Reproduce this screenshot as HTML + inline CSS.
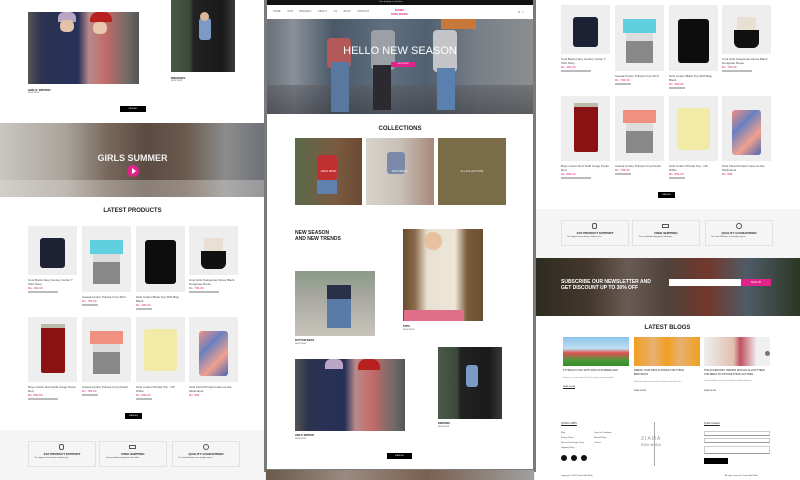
<!DOCTYPE html>
<html><head><meta charset="utf-8"><style>
*{margin:0;padding:0;box-sizing:border-box}
body{width:800px;height:480px;overflow:hidden;background:#e9e9e9;position:relative;font-family:"Liberation Sans",sans-serif;color:#222}
.a{position:absolute}
.panel{position:absolute;background:#fff;overflow:hidden}
.t{position:absolute;font-size:3px;color:#444;white-space:nowrap}
.h{position:absolute;font-weight:bold;color:#222;white-space:nowrap}
.btn{position:absolute;background:#000;height:6px;color:#fff;font-size:2px;text-align:center;line-height:6px}
.tile{position:absolute;background:#eeeeee;overflow:hidden}
.g{position:absolute}
.pr{position:absolute;font-size:3px;color:#d6247e}
.ln{position:absolute;height:2px;background:#bbb}
</style></head><body>

<!-- LEFT PANEL -->
<div class="panel" style="left:0;top:0;width:265px;height:480px">
  <div class="a" style="left:28px;top:12px;width:111px;height:72px;background:linear-gradient(90deg,#555 0,#2c3350 12%,#263058 45%,#b88a8a 55%,#c46a6a 70%,#6f6a66 90%,#555 100%)"></div>
  <div class="a" style="left:58px;top:12px;width:18px;height:10px;background:#b9a6c4;border-radius:6px 6px 0 0"></div>
  <div class="a" style="left:90px;top:12px;width:22px;height:10px;background:#b82020;border-radius:8px 8px 0 0"></div>
  <div class="a" style="left:60px;top:20px;width:14px;height:12px;background:#e3c2a8;border-radius:5px"></div>
  <div class="a" style="left:93px;top:22px;width:14px;height:12px;background:#e8c7ad;border-radius:5px"></div>
  <div class="h" style="left:28px;top:88px;font-size:3px">GIRLS' WINTER</div>
  <div class="t" style="left:28px;top:92px;font-size:2px">SHOP NOW</div>
  <div class="a" style="left:171px;top:0;width:64px;height:72px;background:linear-gradient(90deg,#4a5a48 0,#3b4a3a 30%,#222 35%,#1a1a1a 80%,#3a3a3a 100%)"></div>
  <div class="a" style="left:199px;top:18px;width:12px;height:22px;background:#7b9ac7;border-radius:3px"></div>
  <div class="a" style="left:200px;top:12px;width:9px;height:9px;background:#d9b89a;border-radius:50%"></div>
  <div class="h" style="left:171px;top:76px;font-size:3px">DRESSES</div>
  <div class="t" style="left:171px;top:80px;font-size:2px">SHOP NOW</div>
  <div class="btn" style="left:120px;top:106px;width:26px">VIEW ALL</div>
  <!-- girls summer -->
  <div class="a" style="left:0;top:123px;width:265px;height:74px;background:linear-gradient(90deg,#c9c6c0 0,#a9a39b 25%,#7a6a5e 40%,#5a4a40 55%,#6b5a4e 70%,#8c8c8c 85%,#6c7078 100%)"></div>
  <div class="a" style="left:0;top:180px;width:265px;height:17px;background:rgba(230,225,220,.35)"></div>
  <div class="h" style="left:0;top:153px;width:265px;text-align:center;font-size:9px;color:#f2f2f2">GIRLS SUMMER</div>
  <div class="a" style="left:127px;top:165px;width:12px;height:12px;border-radius:50%;background:#e0248c"></div>
  <div class="a" style="left:132px;top:168px;width:0;height:0;border-left:4px solid #fff;border-top:3px solid transparent;border-bottom:3px solid transparent"></div>
  <div class="h" style="left:0;top:208px;width:265px;text-align:center;font-size:6px">LATEST PRODUCTS</div>
</div>

<!-- PRODUCT GRIDS (left at 0,220; right at 533,-1) -->
<div id="gridL" class="a" style="left:0;top:220px;width:265px;height:260px">
  <div class="tile" style="left:28px;top:6px;width:49px;height:49px"><div class="g" style="left:12px;top:12px;width:25px;height:30px;background:#1c2233;border-radius:3px"></div></div>
  <div class="tile" style="left:82px;top:6px;width:49px;height:66px"><div class="g" style="left:8px;top:14px;width:33px;height:14px;background:#5fd0e0"></div><div class="g" style="left:11px;top:28px;width:27px;height:8px;background:#ddd"></div><div class="g" style="left:11px;top:36px;width:27px;height:22px;background:#888"></div></div>
  <div class="tile" style="left:136px;top:6px;width:49px;height:66px"><div class="g" style="left:9px;top:14px;width:31px;height:44px;background:#0d0d0d;border-radius:3px"></div></div>
  <div class="tile" style="left:189px;top:6px;width:49px;height:49px"><div class="g" style="left:15px;top:12px;width:19px;height:13px;background:#e9dfd2"></div><div class="g" style="left:12px;top:25px;width:25px;height:18px;background:#111;border-radius:0 0 6px 6px"></div></div>
  <div class="t" style="left:28px;top:58px">Cool Boots Navy Henley Cotton T</div><div class="t" style="left:28px;top:62px">Shirt Navy</div><div class="pr" style="left:28px;top:66px">Rs. 499.00</div><div class="ln" style="left:28px;top:71px;width:30px"></div>
  <div class="t" style="left:82px;top:75px">Casual Cotton Printed Crop Shirt</div><div class="pr" style="left:82px;top:79px">Rs. 799.00</div><div class="ln" style="left:82px;top:84px;width:16px"></div>
  <div class="t" style="left:136px;top:75px">Girls Cotton Black Top With Bag</div><div class="t" style="left:136px;top:79px">Black</div><div class="pr" style="left:136px;top:83px">Rs. 499.00</div><div class="ln" style="left:136px;top:88px;width:16px"></div>
  <div class="t" style="left:189px;top:58px">Cool Girls Suspender Dress Black</div><div class="t" style="left:189px;top:62px">Dungaree Dress</div><div class="pr" style="left:189px;top:66px">Rs. 799.00</div><div class="ln" style="left:189px;top:71px;width:30px"></div>
  <div class="tile" style="left:28px;top:97px;width:49px;height:65px"><div class="g" style="left:13px;top:8px;width:24px;height:48px;background:#8a1212;border-radius:2px"></div><div class="g" style="left:13px;top:7px;width:24px;height:4px;background:#bba"></div></div>
  <div class="tile" style="left:82px;top:97px;width:49px;height:65px"><div class="g" style="left:8px;top:14px;width:33px;height:13px;background:#f09080"></div><div class="g" style="left:11px;top:27px;width:27px;height:8px;background:#ddd"></div><div class="g" style="left:11px;top:35px;width:27px;height:22px;background:#888"></div></div>
  <div class="tile" style="left:136px;top:97px;width:49px;height:65px"><div class="g" style="left:8px;top:12px;width:33px;height:42px;background:#f2eba8;border-radius:3px"></div></div>
  <div class="tile" style="left:189px;top:97px;width:49px;height:65px"><div class="g" style="left:10px;top:14px;width:29px;height:45px;background:linear-gradient(135deg,#f09080,#6a80c0,#f0a090,#4a66b0);border-radius:3px"></div></div>
  <div class="t" style="left:28px;top:165px">Boys Cotton Red Solid Cargo Pants</div><div class="t" style="left:28px;top:169px">Red</div><div class="pr" style="left:28px;top:173px">Rs. 899.00</div><div class="ln" style="left:28px;top:178px;width:30px"></div>
  <div class="t" style="left:82px;top:165px">Casual Cotton Printed Crop Peach</div><div class="pr" style="left:82px;top:169px">Rs. 799.00</div><div class="ln" style="left:82px;top:174px;width:16px"></div>
  <div class="t" style="left:136px;top:165px">Girls Cotton Printed Top - Off</div><div class="t" style="left:136px;top:169px">White</div><div class="pr" style="left:136px;top:173px">Rs. 599.00</div><div class="ln" style="left:136px;top:178px;width:16px"></div>
  <div class="t" style="left:189px;top:165px">Girls Floral Printed Cotton A-line</div><div class="t" style="left:189px;top:169px">Multicolour</div><div class="pr" style="left:189px;top:173px">Rs. 599</div>
  <div class="btn" style="left:125px;top:193px;width:17px">VIEW ALL</div>
  <div class="a" style="left:0;top:210px;width:265px;height:50px;background:#f5f5f5"></div>
  <div class="a" style="left:28px;top:221px;width:68px;height:26px;border:1px solid #e2e2e2"></div>
  <div class="a" style="left:99px;top:221px;width:68px;height:26px;border:1px solid #e2e2e2"></div>
  <div class="a" style="left:172px;top:221px;width:68px;height:26px;border:1px solid #e2e2e2"></div>
  <div class="h" style="left:28px;top:232px;width:68px;text-align:center;font-size:3px">24/7 PRODUCT SUPPORT</div>
  <div class="h" style="left:99px;top:232px;width:68px;text-align:center;font-size:3px">FREE SHIPPING</div>
  <div class="h" style="left:172px;top:232px;width:68px;text-align:center;font-size:3px">QUALITY GUARANTEED</div>
  <div class="t" style="left:34px;top:237px;font-size:2px">Our support team always ready for you</div>
  <div class="t" style="left:106px;top:237px;font-size:2px">Free worldwide shipping on all orders</div>
  <div class="t" style="left:178px;top:237px;font-size:2px">Our Team Members are quality experts</div>
  <div class="a" style="left:59px;top:224px;width:5px;height:6px;border:1px solid #555;border-radius:2px"></div>
  <div class="a" style="left:129px;top:225px;width:7px;height:4px;border:1px solid #555"></div>
  <div class="a" style="left:203px;top:224px;width:6px;height:6px;border:1px solid #555;border-radius:50%"></div>
</div>

<!-- RIGHT PANEL -->
<div class="panel" style="left:535px;top:0;width:265px;height:480px">
  <div class="a" style="left:-535px;top:0;width:800px;height:480px"></div>
</div>
<div id="gridR" class="a" style="left:533px;top:-1px;width:267px;height:260px;overflow:hidden">
  <div class="tile" style="left:28px;top:6px;width:49px;height:49px"><div class="g" style="left:12px;top:12px;width:25px;height:30px;background:#1c2233;border-radius:3px"></div></div>
  <div class="tile" style="left:82px;top:6px;width:49px;height:66px"><div class="g" style="left:8px;top:14px;width:33px;height:14px;background:#5fd0e0"></div><div class="g" style="left:11px;top:28px;width:27px;height:8px;background:#ddd"></div><div class="g" style="left:11px;top:36px;width:27px;height:22px;background:#888"></div></div>
  <div class="tile" style="left:136px;top:6px;width:49px;height:66px"><div class="g" style="left:9px;top:14px;width:31px;height:44px;background:#0d0d0d;border-radius:3px"></div></div>
  <div class="tile" style="left:189px;top:6px;width:49px;height:49px"><div class="g" style="left:15px;top:12px;width:19px;height:13px;background:#e9dfd2"></div><div class="g" style="left:12px;top:25px;width:25px;height:18px;background:#111;border-radius:0 0 6px 6px"></div></div>
  <div class="t" style="left:28px;top:58px">Cool Boots Navy Henley Cotton T</div><div class="t" style="left:28px;top:62px">Shirt Navy</div><div class="pr" style="left:28px;top:66px">Rs. 499.00</div><div class="ln" style="left:28px;top:71px;width:30px"></div>
  <div class="t" style="left:82px;top:75px">Casual Cotton Printed Crop Shirt</div><div class="pr" style="left:82px;top:79px">Rs. 799.00</div><div class="ln" style="left:82px;top:84px;width:16px"></div>
  <div class="t" style="left:136px;top:75px">Girls Cotton Black Top With Bag</div><div class="t" style="left:136px;top:79px">Black</div><div class="pr" style="left:136px;top:83px">Rs. 499.00</div><div class="ln" style="left:136px;top:88px;width:16px"></div>
  <div class="t" style="left:189px;top:58px">Cool Girls Suspender Dress Black</div><div class="t" style="left:189px;top:62px">Dungaree Dress</div><div class="pr" style="left:189px;top:66px">Rs. 799.00</div><div class="ln" style="left:189px;top:71px;width:30px"></div>
  <div class="tile" style="left:28px;top:97px;width:49px;height:65px"><div class="g" style="left:13px;top:8px;width:24px;height:48px;background:#8a1212;border-radius:2px"></div><div class="g" style="left:13px;top:7px;width:24px;height:4px;background:#bba"></div></div>
  <div class="tile" style="left:82px;top:97px;width:49px;height:65px"><div class="g" style="left:8px;top:14px;width:33px;height:13px;background:#f09080"></div><div class="g" style="left:11px;top:27px;width:27px;height:8px;background:#ddd"></div><div class="g" style="left:11px;top:35px;width:27px;height:22px;background:#888"></div></div>
  <div class="tile" style="left:136px;top:97px;width:49px;height:65px"><div class="g" style="left:8px;top:12px;width:33px;height:42px;background:#f2eba8;border-radius:3px"></div></div>
  <div class="tile" style="left:189px;top:97px;width:49px;height:65px"><div class="g" style="left:10px;top:14px;width:29px;height:45px;background:linear-gradient(135deg,#f09080,#6a80c0,#f0a090,#4a66b0);border-radius:3px"></div></div>
  <div class="t" style="left:28px;top:165px">Boys Cotton Red Solid Cargo Pants</div><div class="t" style="left:28px;top:169px">Red</div><div class="pr" style="left:28px;top:173px">Rs. 899.00</div><div class="ln" style="left:28px;top:178px;width:30px"></div>
  <div class="t" style="left:82px;top:165px">Casual Cotton Printed Crop Peach</div><div class="pr" style="left:82px;top:169px">Rs. 799.00</div><div class="ln" style="left:82px;top:174px;width:16px"></div>
  <div class="t" style="left:136px;top:165px">Girls Cotton Printed Top - Off</div><div class="t" style="left:136px;top:169px">White</div><div class="pr" style="left:136px;top:173px">Rs. 599.00</div><div class="ln" style="left:136px;top:178px;width:16px"></div>
  <div class="t" style="left:189px;top:165px">Girls Floral Printed Cotton A-line</div><div class="t" style="left:189px;top:169px">Multicolour</div><div class="pr" style="left:189px;top:173px">Rs. 599</div>
  <div class="btn" style="left:125px;top:193px;width:17px">VIEW ALL</div>
  <div class="a" style="left:2px;top:210px;width:265px;height:50px;background:#f5f5f5"></div>
  <div class="a" style="left:28px;top:221px;width:68px;height:26px;border:1px solid #e2e2e2"></div>
  <div class="a" style="left:99px;top:221px;width:68px;height:26px;border:1px solid #e2e2e2"></div>
  <div class="a" style="left:172px;top:221px;width:68px;height:26px;border:1px solid #e2e2e2"></div>
  <div class="h" style="left:28px;top:232px;width:68px;text-align:center;font-size:3px">24/7 PRODUCT SUPPORT</div>
  <div class="h" style="left:99px;top:232px;width:68px;text-align:center;font-size:3px">FREE SHIPPING</div>
  <div class="h" style="left:172px;top:232px;width:68px;text-align:center;font-size:3px">QUALITY GUARANTEED</div>
  <div class="t" style="left:34px;top:237px;font-size:2px">Our support team always ready for you</div>
  <div class="t" style="left:106px;top:237px;font-size:2px">Free worldwide shipping on all orders</div>
  <div class="t" style="left:178px;top:237px;font-size:2px">Our Team Members are quality experts</div>
  <div class="a" style="left:59px;top:224px;width:5px;height:6px;border:1px solid #555;border-radius:2px"></div>
  <div class="a" style="left:129px;top:225px;width:7px;height:4px;border:1px solid #555"></div>
  <div class="a" style="left:203px;top:224px;width:6px;height:6px;border:1px solid #555;border-radius:50%"></div>
</div>

<!-- right lower -->
<div class="a" style="left:535px;top:258px;width:265px;height:58px;background:linear-gradient(90deg,#3d3a2c 0,#5a4a3c 20%,#8a7a70 35%,#6a5a50 50%,#9a4a3a 65%,#6a7a8a 80%,#3a4a2c 100%)"></div>
<div class="a" style="left:535px;top:258px;width:265px;height:58px;background:rgba(0,0,0,.25)"></div>
<div class="h" style="left:561px;top:279px;font-size:5px;color:#fff;line-height:6px">SUBSCRIBE OUR NEWSLETTER AND<br>GET DISCOUNT UP TO 30% OFF</div>
<div class="a" style="left:669px;top:279px;width:72px;height:7px;background:#fff"></div>
<div class="a" style="left:741px;top:279px;width:30px;height:7px;background:#e0248c;color:#fff;font-size:2.5px;text-align:center;line-height:7px">SIGN UP</div>
<div class="h" style="left:535px;top:325px;width:265px;text-align:center;font-size:6px">LATEST BLOGS</div>
<div class="a" style="left:563px;top:337px;width:66px;height:29px;background:linear-gradient(180deg,#8cc4ea 0,#bfdff0 40%,#e05050 55%,#4a9a3a 80%,#3a8a2a 100%)"></div>
<div class="a" style="left:634px;top:337px;width:66px;height:29px;background:linear-gradient(90deg,#f0a020,#e8b070 30%,#f0a020 50%,#e8b070 70%,#f0a020)"></div>
<div class="a" style="left:704px;top:337px;width:66px;height:29px;background:linear-gradient(90deg,#eeeeee,#e0c0b0 45%,#c05060 55%,#f0f0f0 80%)"></div>
<div class="a" style="left:765px;top:351px;width:5px;height:5px;border-radius:50%;background:#777"></div>
<div class="t" style="left:563px;top:369px;font-size:2.5px;color:#222">5 THINGS TO DO WITH KIDS IN SUMMER 2022</div>
<div class="t" style="left:634px;top:369px;font-size:2.5px;color:#222">DRESS YOUR KIDS CLOTHES FOR THEIR</div>
<div class="t" style="left:634px;top:373px;font-size:2.5px;color:#222">BIRTHDAYS</div>
<div class="t" style="left:704px;top:369px;font-size:2.5px;color:#222">THE ACCESSORY TRENDS SHOULD ALLOW THEIR</div>
<div class="t" style="left:704px;top:373px;font-size:2.5px;color:#222">CHILDREN TO CHOOSE THEIR CLOTHES</div>
<div class="t" style="left:563px;top:377px;font-size:2px;color:#888">Summer is a great time for kids to enjoy activities outside</div>
<div class="t" style="left:634px;top:381px;font-size:2px;color:#888">Birthdays deserve the perfect outfit for your little ones</div>
<div class="t" style="left:704px;top:380px;font-size:2px;color:#888">Letting children choose their clothes builds confidence</div>
<div class="t" style="left:563px;top:386px;font-size:2px;color:#222;border-bottom:1px solid #222">READ MORE</div>
<div class="t" style="left:634px;top:390px;font-size:2px;color:#222">READ MORE</div>
<div class="t" style="left:704px;top:390px;font-size:2px;color:#222">READ MORE</div>
<!-- footer -->
<div class="t" style="left:561px;top:422px;font-size:2.5px;color:#222;text-decoration:underline">QUICK LINKS</div>
<div class="t" style="left:561px;top:432px;font-size:2px">Blog</div><div class="t" style="left:594px;top:432px;font-size:2px">Terms of Conditions</div>
<div class="t" style="left:561px;top:437px;font-size:2px">Privacy Policy</div><div class="t" style="left:594px;top:437px;font-size:2px">Refund Policy</div>
<div class="t" style="left:561px;top:442px;font-size:2px">Return &amp; Exchange Policy</div><div class="t" style="left:594px;top:442px;font-size:2px">Contact</div>
<div class="t" style="left:561px;top:447px;font-size:2px">Shipping Policy</div>
<div class="a" style="left:561px;top:455px;width:6px;height:6px;border-radius:50%;background:#111"></div>
<div class="a" style="left:571px;top:455px;width:6px;height:6px;border-radius:50%;background:#111"></div>
<div class="a" style="left:581px;top:455px;width:6px;height:6px;border-radius:50%;background:#111"></div>
<div class="a" style="left:654px;top:422px;width:1px;height:44px;background:#aaa"></div>
<div class="t" style="left:641px;top:436px;font-size:5px;color:#999;letter-spacing:1px">ZIAMA</div>
<div class="t" style="left:641px;top:443px;font-size:3.5px;color:#aaa;font-weight:bold">KIDS MODA</div>
<div class="t" style="left:704px;top:422px;font-size:2.5px;color:#222;text-decoration:underline">Quick Contact</div>
<div class="a" style="left:704px;top:431px;width:66px;height:5px;border:1px solid #ccc;border-bottom:1px solid #999"></div>
<div class="a" style="left:704px;top:438px;width:66px;height:5px;border:1px solid #ccc;border-bottom:1px solid #999"></div>
<div class="a" style="left:704px;top:446px;width:66px;height:8px;border:1px solid #ccc;border-bottom:1px solid #999"></div>
<div class="a" style="left:704px;top:458px;width:24px;height:6px;background:#000"></div>
<div class="t" style="left:561px;top:475px;font-size:2px">Copyright © 2022 Ziama Kids Moda</div>
<div class="t" style="left:725px;top:475px;font-size:2px">All rights reserved. Ziama Kids Moda</div>

<!-- CENTER PANEL -->
<div class="a" style="left:264px;top:0;width:272px;height:472px;background:#7a7a7a"></div>
<div class="a" style="left:266px;top:470px;width:268px;height:10px;background:linear-gradient(90deg,#6a5a4a,#9a8a80 30%,#7a6050 60%,#a0a0a0)"></div>
<div class="panel" style="left:267px;top:0;width:266px;height:469px">
  <div class="a" style="left:0;top:0;width:266px;height:5px;background:#111"></div>
  <div class="t" style="left:112px;top:1px;font-size:2px;color:#ccc">Free shipping on all orders</div>
  <div class="t" style="left:6px;top:10px;font-size:2.5px;color:#666;word-spacing:6px">HOME OUR BRANDS∨ ABOUT US BLOG CONTACT</div>
  <div class="h" style="left:124px;top:9px;font-size:3px;color:#e0248c;line-height:3.5px;text-align:center">ZIAMA<br>KIDS MODA</div>
  <div class="t" style="left:251px;top:9px;font-size:4px;color:#555">⌕ ♁</div>
  <div class="a" style="left:0;top:19px;width:266px;height:95px;background:linear-gradient(90deg,#6a7078 0,#8a9098 10%,#4a5868 25%,#607080 45%,#506070 60%,#7a8088 80%,#8a8e90 100%)"></div>
  <div class="a" style="left:0;top:85px;width:266px;height:29px;background:linear-gradient(180deg,rgba(90,90,95,.5),rgba(60,60,65,.6))"></div>
  <div class="a" style="left:60px;top:38px;width:24px;height:30px;background:#b25a5a;border-radius:4px"></div>
  <div class="a" style="left:104px;top:30px;width:24px;height:40px;background:#9aa0a6;border-radius:4px"></div>
  <div class="a" style="left:166px;top:30px;width:24px;height:42px;background:#c4c4c8;border-radius:4px"></div>
  <div class="a" style="left:64px;top:62px;width:18px;height:50px;background:#5878a0"></div>
  <div class="a" style="left:106px;top:65px;width:18px;height:45px;background:#2a2a30"></div>
  <div class="a" style="left:170px;top:68px;width:18px;height:42px;background:#5a80b0"></div>
  <div class="a" style="left:174px;top:19px;width:35px;height:10px;background:#c8783a"></div>
  <div class="h" style="left:0;top:45px;width:266px;text-align:center;font-size:11px;color:#fff;font-weight:normal">HELLO NEW SEASON</div>
  <div class="a" style="left:124px;top:62px;width:24px;height:5px;background:#e0248c;font-size:2px;color:#fff;text-align:center;line-height:5px">SHOP NOW</div>
  <div class="h" style="left:0;top:126px;width:266px;text-align:center;font-size:6px">COLLECTIONS</div>
  <div class="a" style="left:28px;top:138px;width:67px;height:67px;background:linear-gradient(90deg,#5a6a4a,#7a5a40 60%,#6a4a30)"></div>
  <div class="a" style="left:50px;top:155px;width:20px;height:25px;background:#c03030;border-radius:3px"></div>
  <div class="a" style="left:50px;top:180px;width:20px;height:14px;background:#6080b0"></div>
  <div class="a" style="left:99px;top:138px;width:68px;height:67px;background:linear-gradient(90deg,#d8d4cc,#c8c0b8 50%,#a8887a)"></div>
  <div class="a" style="left:120px;top:152px;width:18px;height:22px;background:#7a8aa8;border-radius:3px"></div>
  <div class="a" style="left:171px;top:138px;width:68px;height:67px;background:#7b6c48"></div>
  <div class="t" style="left:28px;top:170px;width:67px;text-align:center;color:#fff;font-size:2.5px">GIRLS MODA</div>
  <div class="t" style="left:99px;top:170px;width:68px;text-align:center;color:#fff;font-size:2.5px">BOYS MODA</div>
  <div class="t" style="left:171px;top:170px;width:68px;text-align:center;color:#eee;font-size:2.5px">ALL COLLECTIONS</div>
  <div class="h" style="left:28px;top:230px;font-size:5px;line-height:6px">NEW SEASON<br>AND NEW TRENDS</div>
  <div class="a" style="left:136px;top:229px;width:80px;height:92px;background:linear-gradient(90deg,#6a4a30,#8a6a4a 15%,#e8e0d0 30%,#eee6d6 65%,#7a5a3a 80%,#6a5030)"></div>
  <div class="a" style="left:157px;top:232px;width:18px;height:18px;background:#e8c2a0;border-radius:50%"></div>
  <div class="a" style="left:137px;top:310px;width:60px;height:11px;background:#e0708a"></div>
  <div class="h" style="left:136px;top:325px;font-size:2.5px">TOPS</div>
  <div class="t" style="left:136px;top:329px;font-size:2px">SHOP NOW</div>
  <div class="a" style="left:28px;top:271px;width:80px;height:65px;background:linear-gradient(180deg,#8a9a88 0,#a8a8a0 40%,#c8c4bc 100%)"></div>
  <div class="a" style="left:60px;top:288px;width:24px;height:40px;background:#5a7aa8"></div>
  <div class="a" style="left:60px;top:285px;width:24px;height:14px;background:#2a3048"></div>
  <div class="h" style="left:28px;top:339px;font-size:2.5px">BOTTOM WEAR</div>
  <div class="t" style="left:28px;top:343px;font-size:2px">SHOP NOW</div>
  <div class="a" style="left:28px;top:359px;width:110px;height:72px;background:linear-gradient(90deg,#555 0,#2c3350 12%,#263058 45%,#b88a8a 55%,#c46a6a 70%,#6f6a66 90%,#555 100%)"></div>
  <div class="a" style="left:58px;top:359px;width:18px;height:10px;background:#b9a6c4;border-radius:6px 6px 0 0"></div>
  <div class="a" style="left:91px;top:359px;width:22px;height:11px;background:#b82020;border-radius:8px 8px 0 0"></div>
  <div class="h" style="left:28px;top:434px;font-size:2.5px">GIRLS' WINTER</div>
  <div class="t" style="left:28px;top:438px;font-size:2px">SHOP NOW</div>
  <div class="a" style="left:171px;top:347px;width:64px;height:72px;background:linear-gradient(90deg,#4a5a48 0,#3b4a3a 30%,#222 35%,#1a1a1a 80%,#3a3a3a 100%)"></div>
  <div class="a" style="left:199px;top:365px;width:12px;height:22px;background:#7b9ac7;border-radius:3px"></div>
  <div class="h" style="left:171px;top:422px;font-size:2.5px">DRESSES</div>
  <div class="t" style="left:171px;top:426px;font-size:2px">SHOP NOW</div>
  <div class="btn" style="left:120px;top:453px;width:25px">VIEW ALL</div>
</div>
</body></html>
